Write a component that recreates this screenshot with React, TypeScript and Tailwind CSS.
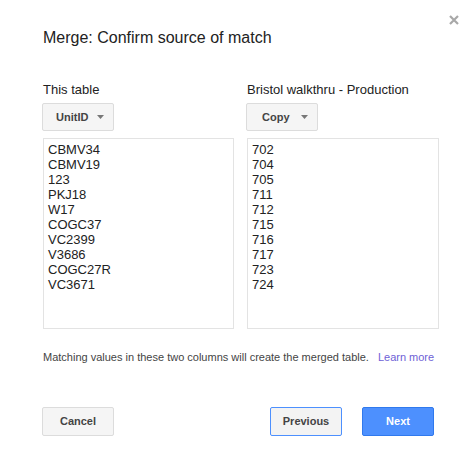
import React from "react";

const left = ["CBMV34", "CBMV19", "123", "PKJ18", "W17", "COGC37", "VC2399", "V3686", "COGC27R", "VC3671"];
const right = ["702", "704", "705", "711", "712", "715", "716", "717", "723", "724"];

function Arrow() {
  return (
    <svg width="7" height="4" viewBox="0 0 7 4" className="block">
      <path d="M0 0 L7 0 L3.5 4 Z" fill="#777" />
    </svg>
  );
}

function Column({ label, btn, items, btnPad }: { label: string; btn: string; items: string[]; btnPad: string }) {
  return (
    <div className="flex flex-col">
      <div className="text-[13px] leading-[16px] text-[#222]">{label}</div>
      <div className="mt-[5px] -ml-px">
        <div className={`h-[28px] w-[72px] flex items-center ${btnPad} bg-[#f5f5f5] border border-[#dcdcdc] rounded-[2px] text-[11px] font-bold text-[#444]`}>
          <span>{btn}</span>
          <span className="ml-auto mr-[9px]"><Arrow /></span>
        </div>
      </div>
      <div className="mt-[7px] h-[191px] border border-[#e3e3e3] pl-[4px] pt-[3px] text-[13px] leading-[15px] text-[#222]">
        {items.map((t) => (
          <div key={t}>{t}</div>
        ))}
      </div>
    </div>
  );
}

export default function App() {
  return (
    <div className="relative w-[469px] h-[463px] bg-white overflow-hidden" style={{ fontFamily: '"Liberation Sans", Arial, sans-serif' }}>
      <div className="absolute left-[449px] top-[15px]">
        <svg width="10" height="10" viewBox="0 0 10 10">
          <path d="M1 1 L9 9 M9 1 L1 9" stroke="#a8a8a8" strokeWidth="2.2" />
        </svg>
      </div>
      <div className="pl-[43px] pr-[30px] pt-[28px]">
        <div className="text-[16px] leading-[20px] text-[#222]">Merge: Confirm source of match</div>
        <div className="mt-[34px] grid grid-cols-[191px_192px] gap-x-[13px]">
          <Column label="This table" btn="UnitID" items={left} btnPad="pl-[13px]" />
          <Column label="Bristol walkthru - Production" btn="Copy" items={right} btnPad="pl-[15px]" />
        </div>
        <div className="mt-[20px] text-[11px] leading-[16px] text-[#444] whitespace-nowrap">
          Matching values in these two columns will create the merged table.
          <span className="ml-[9px] text-[#6e5fd6]">Learn more</span>
        </div>
        <div className="mt-[42px] flex items-center -ml-px">
          <div className="w-[72px] h-[29px] flex items-center justify-center bg-[#f5f5f5] border border-[#dcdcdc] rounded-[2px] text-[11px] font-bold text-[#444]">Cancel</div>
          <div className="ml-auto w-[72px] h-[29px] flex items-center justify-center bg-[#f3f3f3] border border-[#4d90fe] rounded-[2px] text-[11px] font-bold text-[#444]">Previous</div>
          <div className="ml-[20px] mr-[5px] w-[72px] h-[29px] flex items-center justify-center bg-[#4d90fe] border border-[#3079ed] rounded-[2px] text-[11px] font-bold text-white">Next</div>
        </div>
      </div>
    </div>
  );
}
